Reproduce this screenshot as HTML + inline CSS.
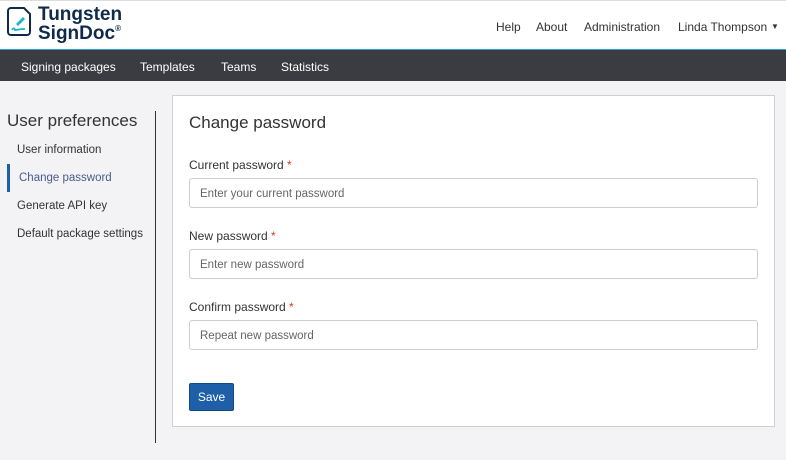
<!DOCTYPE html>
<html><head><style>
*{box-sizing:border-box;margin:0;padding:0}
body{width:786px;height:460px;overflow:hidden;background:#f3f3f6;font-family:"Liberation Sans",sans-serif;color:#333;position:relative}
.hdr{position:absolute;left:0;top:0;width:786px;height:49px;background:#fff;border-top:1px solid #ddd}
.nav{position:absolute;left:0;top:49px;width:786px;height:32px;background:#3b3c42;border-top:1px solid #2aa7c8}
.nav span{position:absolute;top:10px;color:#fff;font-size:12px}
.top a{position:absolute;top:19px;font-size:12px;color:#333}
.side{position:absolute;left:7px;top:111px;font-size:17px;color:#333}
.si{position:absolute;left:17px;font-size:11.5px;color:#333}
.card{position:absolute;left:172px;top:95px;width:603px;height:332px;background:#fff;border:1px solid #d0d0d4}
.lbl{position:absolute;left:16px;font-size:12px;color:#333}
.lbl b{color:#d9381e;font-weight:normal}
.inp{position:absolute;left:16px;width:569px;height:30px;border:1px solid #ccc;border-radius:3px;font-size:11.5px;color:#666;padding:9px 10px}
.lg{position:absolute;left:38px;font-size:19px;font-weight:bold;color:#0f2a4a;line-height:20px;white-space:nowrap}
</style></head><body>
<div class="hdr">
<svg style="position:absolute;left:7px;top:5px" width="26" height="32" viewBox="0 0 26 32"><path d="M4 2h13l6 6v18a3 3 0 0 1-3 3H4a3 3 0 0 1-3-3V5a3 3 0 0 1 3-3z" fill="none" stroke="#0f2a4a" stroke-width="2"/><path d="M5 24c2-3 3-1 3 0 3 0 4-1 10-1" fill="none" stroke="#19b5c8" stroke-width="1.8"/><path d="M9 18l7-7 2 2-7 7z" fill="#19b5c8"/></svg>
<div class="lg" style="top:4px">Tungsten</div>
<div class="lg" style="top:23px">SignDoc<span style="font-size:8px;vertical-align:top;line-height:10px">®</span></div>
<div class="top"><a style="left:496px">Help</a><a style="left:536px">About</a><a style="left:584px">Administration</a><a style="left:678px">Linda Thompson</a><span style="position:absolute;left:771px;top:21px;font-size:8px">▼</span></div>
</div>
<div class="nav"><span style="left:21px">Signing packages</span><span style="left:140px">Templates</span><span style="left:221px">Teams</span><span style="left:281px">Statistics</span></div>
<div class="side">User preferences</div>
<div class="si" style="top:144px">User information</div>
<div style="position:absolute;left:7px;top:164px;width:3px;height:28px;background:#1f5fa8"></div>
<div class="si" style="top:172px;left:19px;color:#4a5a8a">Change password</div>
<div class="si" style="top:200px">Generate API key</div>
<div class="si" style="top:228px">Default package settings</div>
<div style="position:absolute;left:155px;top:111px;width:1px;height:332px;background:#333"></div>
<div class="card">
<div style="position:absolute;left:16px;top:17px;font-size:17px;color:#333">Change password</div>
<div class="lbl" style="top:62px">Current password <b>*</b></div>
<div class="inp" style="top:82px">Enter your current password</div>
<div class="lbl" style="top:133px">New password <b>*</b></div>
<div class="inp" style="top:153px">Enter new password</div>
<div class="lbl" style="top:204px">Confirm password <b>*</b></div>
<div class="inp" style="top:224px">Repeat new password</div>
<div style="position:absolute;left:16px;top:287px;width:45px;height:28px;background:#1f5fa8;border:1px solid #17487f;border-radius:2px;color:#fff;font-size:12px;text-align:center;line-height:26px">Save</div>
</div>
</body></html>
